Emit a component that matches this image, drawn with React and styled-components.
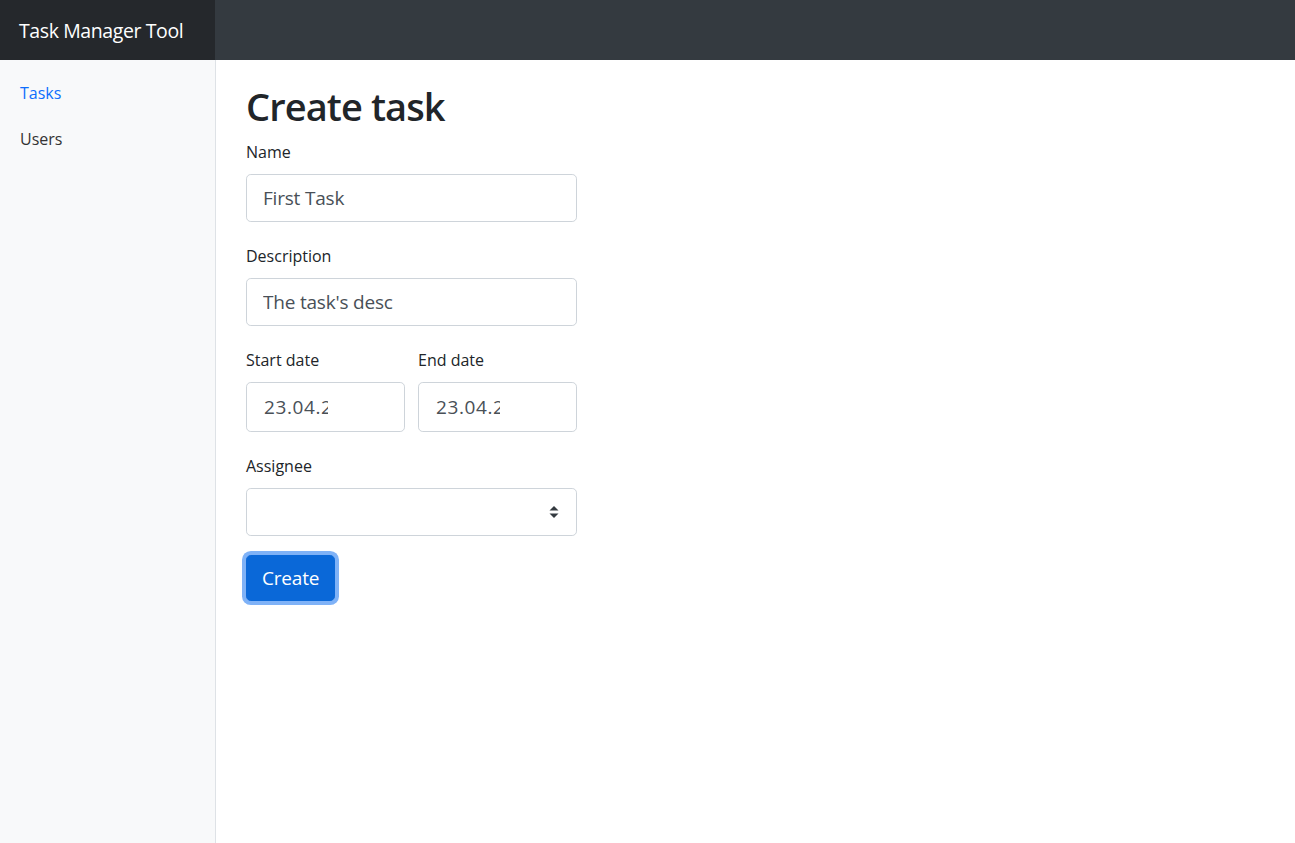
import React from "react";
import styled, { createGlobalStyle } from "styled-components";

const Global = createGlobalStyle`
  html, body { margin: 0; padding: 0; background: #fff; }
  body {
    font-family: "Segoe UI", "Open Sans", "Noto Sans", sans-serif;
    color: #212529;
    font-size: 16px;
    line-height: 1.5;
  }
  * { box-sizing: border-box; }
`;

const Page = styled.div`
  display: flex;
  flex-direction: column;
  height: 843px;
`;

const TopBar = styled.header`
  display: flex;
  height: 60px;
  background: #343a40;
  flex-shrink: 0;
`;

const Brand = styled.div`
  width: 215px;
  background: #25282c;
  color: #fff;
  font-size: 19.5px;
  letter-spacing: -0.4px;
  display: flex;
  align-items: center;
  padding-left: 19px;
  padding-top: 2px;
`;

const Body = styled.div`
  display: flex;
  flex: 1;
  min-height: 0;
`;

const Sidebar = styled.nav`
  width: 216px;
  background: #f8f9fa;
  border-right: 1px solid #dee2e6;
  padding-top: 10px;
  display: flex;
  flex-direction: column;
`;

const NavLink = styled.a`
  display: block;
  padding: 11px 20px;
  font-size: 16px;
  font-weight: 500;
  line-height: 24px;
  color: ${(p) => (p.$active ? "#0d6efd" : "#333")};
  text-decoration: none;
`;

const Main = styled.main`
  flex: 1;
  padding: 22px 30px 0 30px;
`;

const Title = styled.h1`
  margin: 0 0 10px 0;
  font-size: 38px;
  letter-spacing: -0.9px;
  font-weight: 600;
  line-height: 48px;
  color: #212529;
`;

const Form = styled.form`
  width: 331px;
  display: flex;
  flex-direction: column;
`;

const Group = styled.div`
  margin-bottom: 22px;
  flex: 1;
`;

const Row = styled.div`
  display: flex;
  gap: 13px;
`;

const Label = styled.label`
  display: block;
  font-size: 16px;
  line-height: 24px;
  margin-bottom: 10px;
  color: #212529;
`;

const Input = styled.input`
  display: block;
  width: 100%;
  height: 48px;
  padding: 8px 16px;
  font-family: inherit;
  font-size: 19px;
  letter-spacing: -0.2px;
  line-height: 30px;
  color: #495057;
  background: #fff;
  border: 1px solid #ced4da;
  border-radius: 4.8px;
  outline: none;
`;

const DateBox = styled.div`
  display: flex;
  align-items: center;
  width: 100%;
  height: 50px;
  padding: 0 17px;
  font-size: 19px;
  color: #495057;
  background: #fff;
  border: 1px solid #ced4da;
  border-radius: 4.8px;
`;

const DateText = styled.span`
  display: block;
  width: 64px;
  overflow: hidden;
  white-space: nowrap;
  letter-spacing: 0.6px;
`;

const SelectBox = styled.div`
  display: flex;
  align-items: center;
  justify-content: flex-end;
  height: 48px;
  padding: 0 17px;
  background: #fff;
  border: 1px solid #ced4da;
  border-radius: 4.8px;
`;

const Button = styled.button`
  align-self: flex-start;
  margin-top: -3px;
  height: 46px;
  padding: 0 15px;
  font-family: inherit;
  font-size: 19px;
  letter-spacing: -0.2px;
  color: #fff;
  background: #0a68d8;
  border: 1px solid #0a68d8;
  border-radius: 4.8px;
  box-shadow: 0 0 0 4px #7fb2f7;
  cursor: pointer;
`;

const Caret = () => (
  <svg width="10" height="14" viewBox="0 0 10 14">
    <path d="M5 1 L9.5 5.5 L0.5 5.5 Z" fill="#343a40" />
    <path d="M5 13 L9.5 8.5 L0.5 8.5 Z" fill="#343a40" />
  </svg>
);

export default function App() {
  return (
    <>
      <Global />
      <Page>
        <TopBar>
          <Brand>Task Manager Tool</Brand>
        </TopBar>
        <Body>
          <Sidebar>
            <NavLink href="#" $active>Tasks</NavLink>
            <NavLink href="#">Users</NavLink>
          </Sidebar>
          <Main>
            <Title>Create task</Title>
            <Form onSubmit={(e) => e.preventDefault()}>
              <Group>
                <Label>Name</Label>
                <Input defaultValue="First Task" />
              </Group>
              <Group>
                <Label>Description</Label>
                <Input defaultValue="The task's desc" />
              </Group>
              <Row>
                <Group>
                  <Label>Start date</Label>
                  <DateBox><DateText>23.04.2</DateText></DateBox>
                </Group>
                <Group>
                  <Label>End date</Label>
                  <DateBox><DateText>23.04.2</DateText></DateBox>
                </Group>
              </Row>
              <Group>
                <Label>Assignee</Label>
                <SelectBox><Caret /></SelectBox>
              </Group>
              <Button type="submit">Create</Button>
            </Form>
          </Main>
        </Body>
      </Page>
    </>
  );
}
